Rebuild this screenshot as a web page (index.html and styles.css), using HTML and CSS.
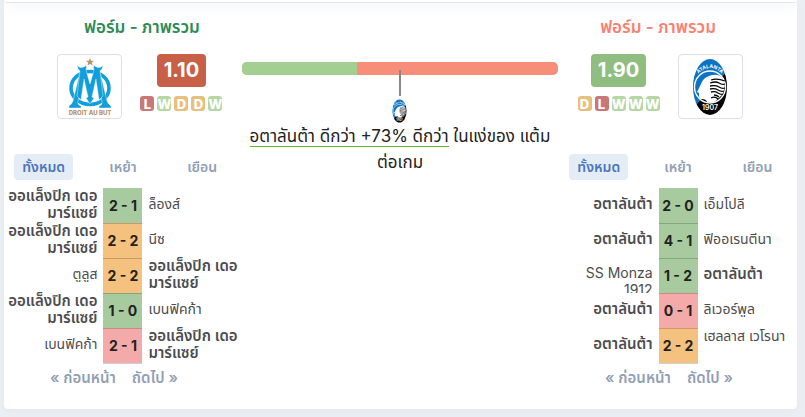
FILE: index.html
```html
<!DOCTYPE html>
<html lang="th">
<head>
<meta charset="utf-8">
<title>ฟอร์ม - ภาพรวม</title>
<link rel="stylesheet" href="styles.css">
</head>
<body>
<svg class="defs" aria-hidden="true">
  <symbol id="marseille" viewBox="0 0 44 58">
    <path fill="#b8946a" d="M22 0l1.100 2.700 2.900.1-2.200 1.900.8 2.800-2.600-1.600-2.600 1.600.8-2.800L18 2.800l2.900-.1z"/>
    <ellipse cx="22" cy="30" rx="19" ry="16.500" fill="none" stroke="#119fdc" stroke-width="3.600"/>
    <g fill="#119fdc" stroke="#fff" stroke-width=".4">
      <path d="M12 14L5 43q-1 3-4 5v2h12v-2q-4-1-3-5l8-27z"/>
      <path d="M32 14l7 29q1 3 4 5v2H31v-2q4-1 3-5l-8-27z"/>
      <path d="M9 7q2 3 5 2.500 3-.5 4-2.500 1 3 0 5l4 14 4-14q-1-2 0-5 1 2 4 2.500 3 .5 5-2.500-.5 4-3 6l3 25-4 4-3-21-4 18 2 1-4 6-4-6 2-1-4-18-3 21-4-4 3-25q-2.500-2-3-6z"/>
    </g>
    <text x="22" y="57" text-anchor="middle" class="crest-motto">DROIT AU BUT</text>
  </symbol>
  <symbol id="atalanta" viewBox="0 0 36 58" preserveAspectRatio="none">
    <clipPath id="oval"><ellipse cx="18" cy="29" rx="17" ry="28"/></clipPath>
    <g clip-path="url(#oval)">
      <path fill="#0b73c4" d="M0 0h36v12L0 51z"/>
      <path fill="#050505" d="M36 12v46H0v-7z"/>
      <ellipse cx="18" cy="29" rx="15.500" ry="16" fill="none" stroke="#fff" stroke-width="1.400"/>
      <path fill="#fff" d="M17 18q10-4 15 4 2 9-2 15-5 5-9 8l-6-1q-1-3-5-3-3 0-3-3v-3l-2-1 4-8q2-6 8-8z"/>
      <path fill="none" stroke="#050505" stroke-width="1.300" d="M19 22q6-2 14 1M18 25q6-2 9 0t6 1M18 28q6-1 9 1t6 1M18 31q5-1 8 1t6 1M19 34q4-1 7 1t5 1M22 37q3 0 5 2M19 40q4-2 7 1"/>
    </g>
    <path id="arc" fill="none" d="M5 17Q18 3 31 17"/>
    <text class="crest-name"><textPath href="#arc" startOffset="50%" text-anchor="middle">ATALANTA</textPath></text>
    <text x="18" y="52" text-anchor="middle" class="crest-year">1907</text>
  </symbol>
</svg>
<main class="card">
  <div class="card-edge"></div>
  <div class="columns">
    <section class="team home">
      <h2>ฟอร์ม - ภาพรวม</h2>
      <div class="summary">
        <div class="crest"><svg class="om" role="img" aria-label="Marseille"><use href="#marseille"/></svg></div>
        <div class="rating">
          <strong class="points low">1.10</strong>
          <div class="form"><span class="l">L</span><span class="w">W</span><span class="d">D</span><span class="d">D</span><span class="w">W</span></div>
        </div>
      </div>
      <div class="tabs"><button class="active">ทั้งหมด</button><button>เหย้า</button><button>เยือน</button></div>
      <table>
        <tr><td class="us"><div>ออแล็งปิก เดอ มาร์แซย์</div></td><td class="score win">2 - 1</td><td><div>ล็องส์</div></td></tr>
        <tr><td class="us"><div>ออแล็งปิก เดอ มาร์แซย์</div></td><td class="score draw">2 - 2</td><td><div>นีซ</div></td></tr>
        <tr><td><div>ตูลูส</div></td><td class="score draw">2 - 2</td><td class="us"><div>ออแล็งปิก เดอ มาร์แซย์</div></td></tr>
        <tr><td class="us"><div>ออแล็งปิก เดอ มาร์แซย์</div></td><td class="score win">1 - 0</td><td><div>เบนฟิคก้า</div></td></tr>
        <tr><td><div>เบนฟิคก้า</div></td><td class="score loss">2 - 1</td><td class="us"><div>ออแล็งปิก เดอ มาร์แซย์</div></td></tr>
      </table>
      <nav class="pager"><a href="#">« ก่อนหน้า</a><a href="#">ถัดไป »</a></nav>
    </section>

    <section class="compare">
      <div class="bar"><span class="bar-home" style="width:36.300%"></span></div>
      <div class="pointer"></div>
      <svg class="mini" role="img" aria-label="Atalanta"><use href="#atalanta"/></svg>
      <p><span class="lead">อตาลันต้า ดีกว่า +73% ดีกว่า</span> ในแง่ของ แต้มต่อเกม</p>
    </section>

    <section class="team away">
      <h2>ฟอร์ม - ภาพรวม</h2>
      <div class="summary">
        <div class="rating">
          <strong class="points high">1.90</strong>
          <div class="form"><span class="d">D</span><span class="l">L</span><span class="w">W</span><span class="w">W</span><span class="w">W</span></div>
        </div>
        <div class="crest"><svg class="ata" role="img" aria-label="Atalanta"><use href="#atalanta"/></svg></div>
      </div>
      <div class="tabs"><button class="active">ทั้งหมด</button><button>เหย้า</button><button>เยือน</button></div>
      <table>
        <tr><td class="us"><div>อตาลันต้า</div></td><td class="score win">2 - 0</td><td><div>เอ็มโปลี</div></td></tr>
        <tr><td class="us"><div>อตาลันต้า</div></td><td class="score win">4 - 1</td><td><div>ฟิออเรนตีนา</div></td></tr>
        <tr><td><div class="latin">SS Monza 1912</div></td><td class="score win">1 - 2</td><td class="us"><div>อตาลันต้า</div></td></tr>
        <tr><td class="us"><div>อตาลันต้า</div></td><td class="score loss">0 - 1</td><td><div>ลิเวอร์พูล</div></td></tr>
        <tr><td class="us"><div>อตาลันต้า</div></td><td class="score draw">2 - 2</td><td><div class="two-line">เฮลลาส เวโรนา</div></td></tr>
      </table>
      <nav class="pager"><a href="#">« ก่อนหน้า</a><a href="#">ถัดไป »</a></nav>
    </section>
  </div>
</main>
</body>
</html>
```
FILE: styles.css
```css
* { box-sizing: border-box; }
body {
  margin: 0;
  padding: 0 8px 8px 4px;
  background: #ebeff4;
  color: #4c4c50;
  font: 14px/17px Inter, "Noto Sans Thai", "Noto Sans", sans-serif;
}
.defs { position: absolute; width: 0; height: 0; }
.crest-motto { font: 800 6px Inter, sans-serif; fill: #b8946a; }
.crest-name { font: 700 5px Inter, sans-serif; fill: #fff; }
.crest-year { font: 600 7px Inter, sans-serif; fill: #fff; }
.card {
  background: #fff;
  border-radius: 0 0 4px 4px;
  box-shadow: 0 2px 6px #e3e7ed;
  overflow: hidden;
}
.card-edge {
  height: 3px;
  border-bottom: 1px solid #e4e5f0;
  border-radius: 0 0 4px 4px;
  box-shadow: 0 2px 14px #dde2e2;
}
.columns { display: grid; grid-template-columns: 3fr 4fr 3fr; }
.team { padding-bottom: 23px; min-width: 0; }
h2 {
  margin: 14px 0 16px;
  font-size: 17px;
  line-height: 21px;
  font-weight: 600;
  text-align: center;
}
.home h2 { color: #2e8b57; padding-left: 38px; }
.away h2 { color: #fa8072; padding-right: 40px; }
.summary { display: flex; justify-content: center; gap: 18px; }
.home .summary { padding-left: 34px; }
.away .summary { padding-right: 36px; }
.crest {
  display: flex;
  align-items: center;
  justify-content: center;
  width: 65px;
  height: 65px;
  border: 1px solid #dddfe9;
  border-radius: 4px;
}
.om { width: 44px; height: 58px; }
.ata { width: 36px; height: 58px; }
.rating { display: flex; flex-direction: column; align-items: center; gap: 9px; }
.points {
  padding: 0 7px;
  border-radius: 4px;
  color: #fff;
  font-size: 20px;
  line-height: 33px;
}
.low { background: #c85f47; }
.high { background: #90bd80; }
.form { display: flex; gap: 3px; }
.form span {
  display: flex;
  justify-content: center;
  width: 14px;
  height: 15px;
  border-radius: 3px;
  color: #fff;
  font-size: 13px;
  line-height: 16px;
  font-weight: 800;
}
.form .l { background: #c97777; }
.form .w { background: #b5d6a5; }
.form .d { background: #e8bf7c; }
.tabs { display: grid; grid-template-columns: repeat(3, 1fr); justify-items: center; margin: 35px 0 8px; }
button {
  border: 0;
  border-radius: 4px;
  padding: 0 8px;
  background: none;
  color: #929fb4;
  font: 600 14px/26px Inter, "Noto Sans Thai", "Noto Sans", sans-serif;
}
.active { background: #e4ecf6; color: #4b75be; }
table { width: 100%; border-collapse: collapse; table-layout: fixed; }
td { height: 35px; padding: 0; }
td div { max-height: 35px; margin-top: -4px; overflow: hidden; }
td .latin { height: 35px; margin: 0; padding-top: 6px; }
td .two-line { min-height: 34px; }
td:first-child { text-align: right; padding-right: 6px; }
td:last-child { padding-left: 6px; }
.us { font-size: 15px; font-weight: 600; }
.score {
  width: 39px;
  border-bottom: 1px solid #00000030;
  color: #222;
  font-weight: 700;
  text-align: center;
}
.win { background: #a7cb9f; }
.draw { background: #f5c17e; }
.loss { background: #f5aaaa; }
.pager { display: flex; justify-content: center; gap: 16px; padding: 5px 18px 0 0; }
.pager a { color: #929fb4; font-size: 15px; font-weight: 600; text-decoration: none; }
.compare { display: flex; flex-direction: column; align-items: center; padding: 59px 1px 0 0; }
.bar { width: 100%; height: 13px; border-radius: 5px; background: #f68e79; overflow: hidden; }
.bar-home { display: block; height: 100%; background: #a3cf91; }
.pointer { width: 2px; height: 26px; margin-top: -5px; background: #888; z-index: 1; }
.mini { width: 15px; height: 24px; margin-top: 3px; }
p { margin: 0; color: #222; font-size: 17px; line-height: 26px; text-align: center; }
.lead { border-bottom: 1px solid #6cb82e; }
```
